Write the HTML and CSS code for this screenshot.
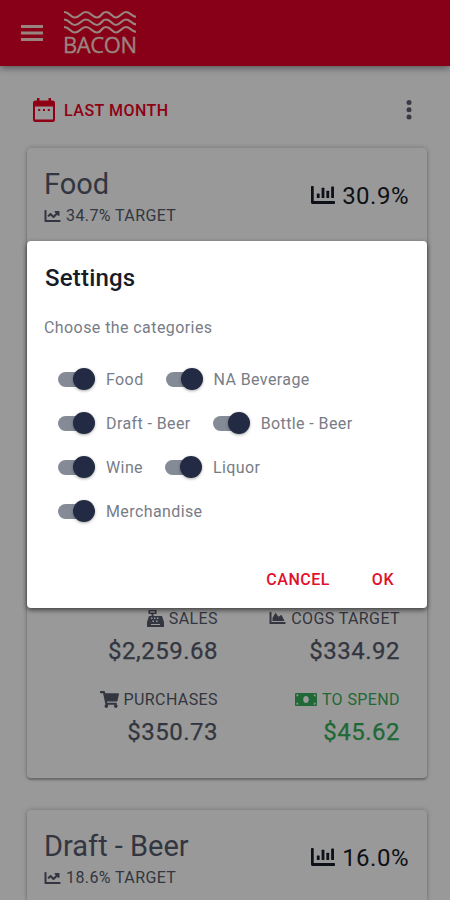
FILE: index.html
```html
<!DOCTYPE html>
<html lang="en">
<head>
<meta charset="utf-8">
<title>Bacon</title>
<link rel="stylesheet" href="styles.css">
</head>
<body>
<svg class="defs" width="0" height="0">
  <symbol id="line" viewBox="0 64 512 384"><path d="M496 384H64V80c0-8.84-7.16-16-16-16H16C7.16 64 0 71.16 0 80v336c0 17.67 14.33 32 32 32h464c8.84 0 16-7.16 16-16v-32c0-8.84-7.16-16-16-16zM464 96H345.94c-21.38 0-32.09 25.85-16.97 40.97l32.4 32.4L288 242.75l-73.37-73.37c-12.5-12.5-32.76-12.5-45.25 0l-68.69 68.69c-6.25 6.25-6.25 16.38 0 22.63l22.62 22.62c6.25 6.25 16.38 6.25 22.63 0L192 237.25l73.37 73.37c12.5 12.5 32.76 12.5 45.25 0l96-96 32.4 32.4c15.12 15.12 40.97 4.41 40.97-16.97V112c.01-8.84-7.15-16-15.99-16z"/></symbol>
  <symbol id="bars" viewBox="0 64 512 384"><path d="M496 386H58V80c0-9-7-16-16-16H16C7 64 0 71 0 80v336c0 18 14 32 32 32h464c9 0 16-7 16-16v-30c0-9-7-16-16-16z"/><rect x="124" y="222" width="60" height="98" rx="12"/><rect x="226" y="100" width="60" height="220" rx="12"/><rect x="328" y="164" width="60" height="156" rx="12"/><rect x="430" y="72" width="60" height="248" rx="12"/></symbol>
  <symbol id="area" viewBox="0 64 512 384"><path d="M500 384c6.600 0 12 5.400 12 12v40c0 6.600-5.400 12-12 12H12c-6.600 0-12-5.400-12-12V76c0-6.600 5.400-12 12-12h40c6.600 0 12 5.400 12 12v308h436zM372.700 159.500L288 216l-85.300-113.700c-5.100-6.800-15.500-6.300-19.900 1L96 248v104h384l-89.900-187.800c-3.200-6.500-11.400-8.700-17.400-4.700z"/></symbol>
</svg>

<header class="topbar">
  <svg class="menu" viewBox="0 0 22 16"><path d="M0 1.500h22M0 8h22M0 14.500h22"/></svg>
  <div class="brand">
    <svg class="waves" viewBox="0 0 72 24"><path id="w" d="M0 2C6 2 6 7.500 11 7.500S17 2 22 2s6 5.500 11 5.500S37 2 42 2s6 5.500 10 5.500S58 2 62 2s5 4 10 5"/><use href="#w" y="7.500"/><use href="#w" y="15"/></svg>
    <span class="name">BACON</span>
  </div>
</header>

<main>
  <div class="period">
    <svg class="calendar" viewBox="0 0 22 24"><path fill-rule="evenodd" d="M4 0h2.500v2.500h9V0H18v2.500h1.500A2.500 2.500 0 0 1 22 5v16.500a2.500 2.500 0 0 1-2.500 2.500h-17A2.500 2.500 0 0 1 0 21.500V5a2.500 2.500 0 0 1 2.500-2.500H4zM2 8.500v13h18v-13zM5.200 11h2v2h-2zM10 11h2v2h-2zM14.800 11h2v2h-2z"/></svg>
    <span class="period-name">LAST MONTH</span>
    <svg class="more" viewBox="0 0 6 20"><circle cx="3" cy="2.500" r="2.500"/><circle cx="3" cy="9.800" r="2.500"/><circle cx="3" cy="17.100" r="2.500"/></svg>
  </div>

  <section class="card tall">
    <div class="card-head">
      <div>
        <h2>Food</h2>
        <p class="target"><svg class="i-line"><use href="#line"/></svg>34.7% TARGET</p>
      </div>
      <div class="share"><svg class="i-bars"><use href="#bars"/></svg>30.9%</div>
    </div>
    <div class="stats">
      <div class="stat">
        <div class="label"><svg class="i-reg" viewBox="0 0 17 17"><path fill-rule="evenodd" d="M1.500 0h8v4H6.500v2H15l2 6v5H0v-5l2-6h2.500V4h-3zM3 1.300v1.300h5V1.300zM4 7.500V9h1.500V7.500zm3 0V9h1.500V7.500zm3 0V9h1.500V7.500zM5.500 10.500V12H7v-1.500zm3.500 0V12h1.500v-1.500zM4 14v1h9v-1z"/></svg>SALES</div>
        <div class="value">$2,259.68</div>
      </div>
      <div class="stat">
        <div class="label"><svg class="i-line"><use href="#area"/></svg>COGS TARGET</div>
        <div class="value">$334.92</div>
      </div>
      <div class="stat">
        <div class="label"><svg class="i-cart" viewBox="0 0 576 512"><path d="M528.120 301.319l47.273-208C578.806 78.301 567.391 64 551.990 64H159.208l-9.166-44.810C147.758 8.021 137.930 0 126.529 0H24C10.745 0 0 10.745 0 24v16c0 13.255 10.745 24 24 24h69.883l70.248 343.435C147.325 417.100 136 435.222 136 456c0 30.928 25.072 56 56 56s56-25.072 56-56c0-15.674-6.447-29.835-16.824-40h209.647C430.447 426.165 424 440.326 424 456c0 30.928 25.072 56 56 56s56-25.072 56-56c0-22.172-12.888-41.332-31.579-50.405l5.517-24.276c3.413-15.018-8.002-29.319-23.403-29.319H218.117l-6.545-32h293.145c11.206 0 20.920-7.754 23.403-18.681z"/></svg>PURCHASES</div>
        <div class="value">$350.73</div>
      </div>
      <div class="stat good">
        <div class="label"><svg class="i-cash" viewBox="0 0 22 13"><path fill-rule="evenodd" d="M1 0h20a1 1 0 0 1 1 1v11a1 1 0 0 1-1 1H1a1 1 0 0 1-1-1V1a1 1 0 0 1 1-1zM11 3c-1.700 0-2.800 1.600-2.800 3.500S9.300 10 11 10s2.800-1.600 2.800-3.500S12.700 3 11 3zM1.500 1.500v2a2 2 0 0 0 2-2zm17 0a2 2 0 0 0 2 2v-2zM1.500 9.500v2h2a2 2 0 0 0-2-2zm19 0a2 2 0 0 0-2 2h2z"/></svg>TO SPEND</div>
        <div class="value">$45.62</div>
      </div>
    </div>
  </section>

  <section class="card last">
    <div class="card-head">
      <div>
        <h2>Draft - Beer</h2>
        <p class="target"><svg class="i-line"><use href="#line"/></svg>18.6% TARGET</p>
      </div>
      <div class="share"><svg class="i-bars"><use href="#bars"/></svg>16.0%</div>
    </div>
  </section>
</main>

<div class="backdrop">
  <div class="dialog">
    <h1>Settings</h1>
    <p class="hint">Choose the categories</p>
    <div class="options">
      <div class="row"><span class="opt"><i class="switch"></i>Food</span><span class="opt"><i class="switch"></i>NA Beverage</span></div>
      <div class="row"><span class="opt"><i class="switch"></i>Draft - Beer</span><span class="opt"><i class="switch"></i>Bottle - Beer</span></div>
      <div class="row"><span class="opt"><i class="switch"></i>Wine</span><span class="opt"><i class="switch"></i>Liquor</span></div>
      <div class="row"><span class="opt"><i class="switch"></i>Merchandise</span></div>
    </div>
    <div class="actions"><span>CANCEL</span><span>OK</span></div>
  </div>
</div>
</body>
</html>
```
FILE: styles.css
```css
* { box-sizing: border-box; margin: 0; padding: 0; }
html, body { height: 900px; overflow: hidden; }
body { background: #fff; font-family: Roboto, "Liberation Sans", sans-serif; color: #565b6b; }
svg { display: block; flex: none; fill: currentColor; }
.defs { position: absolute; }

.topbar { height: 66px; background: #e20027; display: flex; padding: 10px 0 0 21px; gap: 20px; box-shadow: 0 2px 7px rgba(0,0,0,.45); color: #ffdcd4; }
.menu { width: 22px; height: 16px; margin-top: 15px; stroke: currentColor; stroke-width: 2.800; }
.brand { width: 74px; }
.waves { width: 72px; height: 24px; fill: none; stroke: currentColor; stroke-width: 2.200; margin-left: 1px; }
.name { display: block; font-family: "Open Sans", sans-serif; font-size: 22px; line-height: 20px; letter-spacing: -.4px; -webkit-text-stroke: .3px currentColor; }

.period { height: 82px; padding: 6px 38px 0 33px; display: flex; align-items: center; color: #f00024; }
.calendar { width: 22px; height: 24px; }
.period-name { margin-left: 9px; font-size: 16px; font-weight: 500; letter-spacing: .5px; }
.more { width: 6px; height: 20px; margin-left: auto; color: #5c6272; }

.card { margin: 0 23px 32px 27px; border-radius: 4px; box-shadow: 0 2px 2px rgba(0,0,0,.24), 0 0 5px rgba(0,0,0,.25); display: flex; flex-direction: column; }
.tall { height: 630px; }
.last { height: 90px; margin-bottom: 0; border-radius: 4px 4px 0 0; }
.card-head { display: flex; justify-content: space-between; padding: 18px 18px 0 17px; }
h2 { font-size: 29px; font-weight: 400; line-height: 36px; letter-spacing: 0; }
.target { display: flex; align-items: center; gap: 5px; font-size: 16px; line-height: 20px; margin-top: 4px; letter-spacing: .4px; }
.i-line { width: 17px; height: 12px; }
.share { display: flex; align-items: center; gap: 7px; height: 60px; font-size: 24px; color: #181b27; letter-spacing: .5px; }
.i-bars { width: 24px; height: 18px; margin-top: -2px; }

.stats { margin-top: auto; padding: 0 27px 30px 0; display: grid; grid-template-columns: 191px 1fr; row-gap: 18px; }
.stat { text-align: right; }
.label { display: flex; justify-content: flex-end; align-items: center; gap: 5px; font-size: 16px; line-height: 22px; height: 22px; margin-top: 4px; letter-spacing: .4px; }
.label svg { margin-top: -2px; }
.value { font-size: 24px; line-height: 32px; margin-top: 5px; height: 32px; letter-spacing: .5px; }
.stat .value { -webkit-text-stroke: .25px currentColor; }
.good { color: #37ae5c; }
.i-reg { width: 17px; height: 17px; }
.i-cart { width: 19px; height: 17px; }
.i-cash { width: 22px; height: 13px; }

.backdrop { position: absolute; inset: 0; background: rgba(0,0,0,.4); padding: 241px 23px 0 27px; }
.dialog { height: 367px; background: #fff; border-radius: 4px; box-shadow: 0 2px 5px rgba(0,0,0,.6); padding: 20px 18px 0; display: flex; flex-direction: column; color: #787c87; }
h1 { font-size: 24px; line-height: 34px; font-weight: 500; color: #181c27; letter-spacing: .2px; }
.hint { font-size: 16px; line-height: 24px; margin: 21px 0 0 -1px; letter-spacing: .42px; }
.options { margin: 17px 0 0 13px; }
.row { display: flex; height: 44px; align-items: center; gap: 22px; }
.opt { display: flex; align-items: center; gap: 11px; font-size: 16px; letter-spacing: .4px; white-space: nowrap; }
.switch { width: 37px; height: 22px; display: grid; align-items: center; }
.switch::before { content: ""; grid-area: 1 / 1; width: 30px; height: 15px; border-radius: 8px; background: #858b96; }
.switch::after { content: ""; grid-area: 1 / 1; justify-self: end; width: 22px; height: 22px; border-radius: 50%; background: #222b43; box-shadow: 0 1px 3px rgba(0,0,0,.35); }
.actions { margin-top: 35px; display: flex; justify-content: flex-end; gap: 42px; padding-right: 15px; font-size: 16px; line-height: 24px; font-weight: 500; color: #e0112a; letter-spacing: .5px; }
```
